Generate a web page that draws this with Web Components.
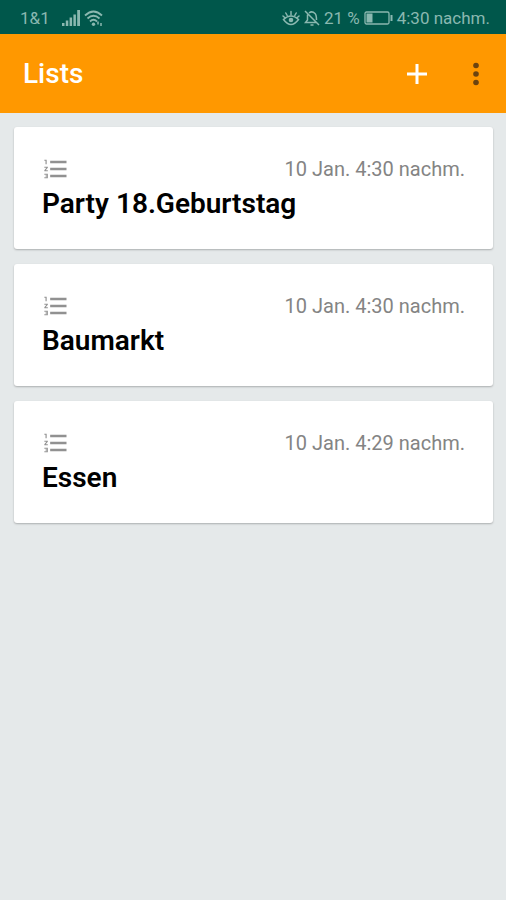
<!DOCTYPE html>
<html lang="de">
<head>
<meta charset="utf-8">
<meta name="viewport" content="width=device-width, initial-scale=1">
<title>Lists</title>
<style>
  body {
    margin: 0;
    min-height: 100vh;
    background: #e5e9ea;
    font-family: Roboto, "Liberation Sans", sans-serif;
  }
</style>
</head>
<body>
<status-bar carrier="1&amp;1" battery="21 %" time="4:30 nachm."></status-bar>
<app-bar>Lists</app-bar>
<list-stack>
  <list-card date="10 Jan. 4:30 nachm.">Party 18.Geburtstag</list-card>
  <list-card date="10 Jan. 4:30 nachm.">Baumarkt</list-card>
  <list-card date="10 Jan. 4:29 nachm.">Essen</list-card>
</list-stack>

<script>
class StatusBar extends HTMLElement {
  constructor() {
    super()
    this.attachShadow({ mode: 'open' })
    this.shadowRoot.innerHTML = `
      <style>
        :host {
          display: flex;
          justify-content: space-between;
          align-items: center;
          height: 34px;
          padding: 2px 16px 0 20px;
          box-sizing: border-box;
          background: #00574b;
          color: #8ab8b0;
          font-size: 17px;
          line-height: 20px;
          white-space: nowrap;
        }
        div { display: flex; align-items: center; }
        .left { gap: 4px; }
        .right { gap: 4px; }
        .carrier { margin-right: 8px; }
        svg { display: block; flex-shrink: 0; }
      </style>
      <div class="left">
        <span class="carrier"></span>
        <svg width="18" height="16" viewBox="0 0 18 16" fill="currentColor" aria-hidden="true">
          <path d="M0 13h2.500v3H0zM3.800 10.500h2.500V16H3.800zM7.600 7.500h2.500V16H7.600zM11.400 4.500h2.500V16h-2.500zM15.200 0H18v16h-2.800z"/>
        </svg>
        <svg width="19" height="16" viewBox="0 0 19 16" fill="none" stroke="currentColor" stroke-width="1.800" aria-hidden="true">
          <path d="M1 5.500Q9.500-2.500 18 5.500M3.500 8.500Q9.500 3 15.500 8.500M6 11.500Q9.500 8 13 11.500"/>
          <circle cx="9.500" cy="14.200" r="1.700" fill="currentColor" stroke="none"/>
          <path d="M14 11.500v3M17 13v3" stroke-width="1.500"/>
        </svg>
      </div>
      <div class="right">
        <svg width="18" height="16" viewBox="0 0 18 16" fill="none" stroke="currentColor" stroke-width="1.500" stroke-linecap="round" aria-hidden="true">
          <path d="M1.500 9.500Q9 2.500 16.500 9.500Q9 19.500 1.500 9.500z"/>
          <circle cx="9" cy="10" r="2.300" fill="currentColor" stroke="none"/>
          <path d="M9 1.500V5M3.800 3l1.400 2.500M14.200 3l-1.400 2.500M1 6l1.700 1.500M17 6l-1.700 1.500"/>
        </svg>
        <svg width="16" height="16" viewBox="0 0 16 16" fill="none" stroke="currentColor" stroke-width="1.500" aria-hidden="true">
          <path d="M1 1l14 14M3.500 4.500V10L1.500 12.500H12M5 3Q8 .5 11 3.500Q12.500 5 12.500 10M6.500 15h3"/>
        </svg>
        <span class="battery"></span>
        <svg width="29" height="14" viewBox="0 0 29 14" fill="none" stroke="currentColor" stroke-width="1.300" aria-hidden="true">
          <rect x="1" y="1" width="24" height="12" rx="1.500"/>
          <path d="M2.500 2.500h6v9h-6z" fill="currentColor" stroke="none"/>
          <path d="M27.500 4v6" stroke-width="2"/>
        </svg>
        <span class="time"></span>
      </div>
    `
  }

  connectedCallback() {
    for (const name of ['carrier', 'battery', 'time']) {
      this.shadowRoot.querySelector(`.${name}`).textContent = this.getAttribute(name)
    }
  }
}

class AppBar extends HTMLElement {
  constructor() {
    super()
    this.attachShadow({ mode: 'open' })
    this.shadowRoot.innerHTML = `
      <style>
        :host {
          display: flex;
          align-items: center;
          height: 79px;
          padding: 0 10px 0 23px;
          box-sizing: border-box;
          background: #ff9800;
          color: #fff;
        }
        h1 { flex: 1; margin: 0; font-size: 28px; line-height: 32px; font-weight: 500; }
        .actions { display: flex; gap: 19px; }
        button {
          display: grid;
          place-items: center;
          width: 40px;
          height: 40px;
          padding: 0;
          border: 0;
          background: none;
          color: inherit;
        }
        .more { color: #6b4310; }
      </style>
      <h1><slot></slot></h1>
      <div class="actions">
        <button type="button" aria-label="Add">
          <svg width="20" height="20" viewBox="0 0 20 20" fill="currentColor" aria-hidden="true">
            <path d="M8.500 0h3v8.500H20v3h-8.500V20h-3v-8.500H0v-3h8.500z"/>
          </svg>
        </button>
        <button type="button" class="more" aria-label="More">
          <svg width="6" height="24" viewBox="0 0 6 24" fill="currentColor" aria-hidden="true">
            <circle cx="3" cy="3.500" r="2.800"/>
            <circle cx="3" cy="12" r="2.800"/>
            <circle cx="3" cy="20.500" r="2.800"/>
          </svg>
        </button>
      </div>
    `
  }
}

class ListStack extends HTMLElement {
  constructor() {
    super()
    this.attachShadow({ mode: 'open' })
    this.shadowRoot.innerHTML = `
      <style>
        :host {
          display: flex;
          flex-direction: column;
          gap: 15px;
          padding: 14px 13px 14px 14px;
        }
      </style>
      <slot></slot>
    `
  }
}

class ListCard extends HTMLElement {
  static get observedAttributes() { return ['date'] }

  constructor() {
    super()
    this.attachShadow({ mode: 'open' })
    this.shadowRoot.innerHTML = `
      <style>
        :host {
          display: block;
          padding: 28px 28px 25px;
          border-radius: 3px;
          background: #fff;
          box-shadow: 0 1px 2px rgba(0, 0, 0, .25);
        }
        .meta {
          display: flex;
          justify-content: space-between;
          align-items: center;
          height: 28px;
          color: #848484;
          font-size: 20px;
          line-height: 24px;
        }
        svg { display: block; color: #919191; }
        h2 { margin: 0; color: #000; font-size: 28px; line-height: 41px; font-weight: 600; }
      </style>
      <div class="meta">
        <svg width="28" height="28" viewBox="0 0 24 24" fill="currentColor" aria-hidden="true">
          <path d="M2 17h2v.5H3v1h1v.5H2v1h3v-4H2v1zm1-9h1V4H2v1h1v3zm-1 3h1.800L2 13.100v.9h3v-1H3.200L5 10.900V10H2v1zm5-6v2h14V5H7zm0 14h14v-2H7v2zm0-6h14v-2H7v2z"/>
        </svg>
        <time></time>
      </div>
      <h2><slot></slot></h2>
    `
  }

  attributeChangedCallback(name, previous, value) {
    this.shadowRoot.querySelector('time').textContent = value
  }
}

customElements.define('status-bar', StatusBar)
customElements.define('app-bar', AppBar)
customElements.define('list-stack', ListStack)
customElements.define('list-card', ListCard)
</script>
</body>
</html>
